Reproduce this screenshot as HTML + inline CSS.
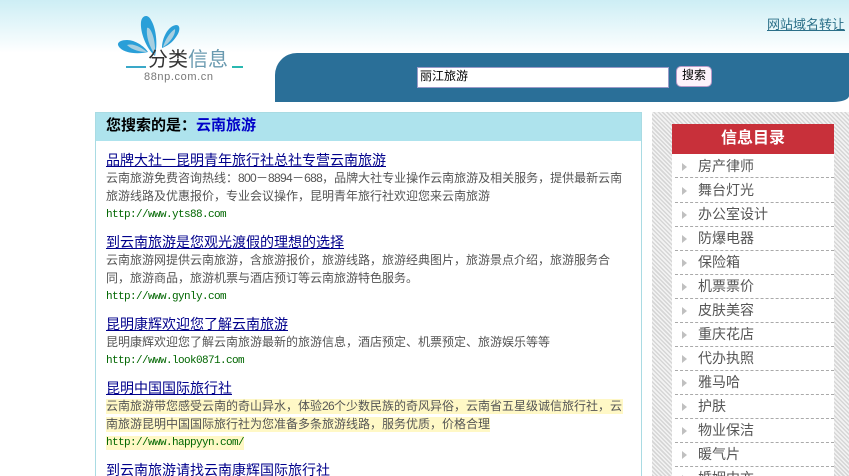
<!DOCTYPE html>
<html style="height:476px;overflow:hidden"><head><meta charset="utf-8">
<style>
html,body{margin:0;padding:0}
body{width:849px;height:476px;overflow:hidden;background:#fff;font-family:"Liberation Sans","WenQuanYi Zen Hei","Noto Sans CJK SC",sans-serif}
#w{position:relative;width:849px;height:476px;overflow:hidden}
.a{position:absolute;white-space:nowrap}
.t{font-size:14px;line-height:18px;color:#00008b;text-decoration:underline;left:106px}
.d{font-size:12px;line-height:18px;color:#555;left:106px;width:520px}
.d i{font-style:normal;letter-spacing:-.67px}
.u{font-family:"Liberation Mono",monospace;font-size:11px;letter-spacing:-.6px;line-height:14px;color:#060;left:106px}
.i{position:absolute;left:672px;width:162px;height:24px;background:#fff;font-size:14px;line-height:23px;color:#555;overflow:hidden}
.i:after{content:"";position:absolute;left:3px;right:0;top:23px;border-bottom:1px dashed #aaa}
.i span{position:absolute;left:26px}
.i b{position:absolute;left:10px;top:8px;width:0;height:0;border-left:5px solid #c0c0c0;border-top:4px solid transparent;border-bottom:4px solid transparent}
.y{background:#fff8c6}
</style></head><body><div id="w">
<div class="a" style="left:0;top:0;width:849px;height:53px;background:linear-gradient(#cdeef5,#fff)"></div>
<svg class="a" style="left:110px;top:10px" width="140" height="80" viewBox="0 0 140 80">
<path d="M45 46C36 38 30 22 31 12C32 5 38 4 41 10C46 18 48 34 45 46Z" fill="#2a9fd8"/><path d="M45 45C39 36 36 26 37 18C40 16 46 28 45 45Z" fill="#a8cfe0"/>
<path d="M52 38C52 28 58 16 66 15C71 15 70 22 66 27C62 33 57 36 52 38Z" fill="#2a9fd8"/><path d="M53 37C55 30 60 22 65 19C66 24 60 33 53 37Z" fill="#a8cfe0"/>
<path d="M38 42C30 44 16 44 10 38C5 33 10 30 17 30C25 30 34 36 38 42Z" fill="#2a9fd8"/><path d="M37 42C30 42 22 40 17 35C24 33 32 38 37 42Z" fill="#a8cfe0"/>
<rect x="16" y="56" width="20" height="2" fill="#3aa8c8"/><rect x="122" y="56" width="11" height="2" fill="#2ab8b0"/></svg>
<div class="a" style="left:148px;top:49px;font-size:20px;line-height:22px;color:#333">分类<span style="color:#6a9ab0">信息</span></div>
<div class="a" style="left:144px;top:70px;font-size:11px;line-height:14px;color:#777;letter-spacing:.6px">88np.com.cn</div>
<div class="a" style="left:767px;top:16px;font-size:13px;line-height:18px;color:#2a6f88;text-decoration:underline">网站域名转让</div>
<div class="a" style="left:275px;top:53px;width:574px;height:49px;background:#2a6f98;border-radius:22px 0 16px 0/22px 0 6px 0"></div>
<div class="a" style="left:417px;top:67px;width:250px;height:19px;background:#fff;border:1px solid #9a9ac8;font-size:12px;line-height:16px;color:#000;text-indent:2px">丽江旅游</div>
<div class="a" style="left:676px;top:66px;width:34px;height:19px;background:#fdf3fb;border:1px solid #b89ac8;border-radius:5px;font-size:12px;line-height:17px;color:#000;text-align:center">搜索</div>

<div class="a" style="left:95px;top:112px;width:545px;height:363px;border:1px solid #a9dbe3;border-bottom:0;background:#fff"></div>
<div class="a" style="left:96px;top:113px;width:545px;height:28px;background:#aee3ed;font-size:15px;line-height:26px;font-weight:bold;color:#000;text-indent:10px">您搜索的是：<span style="color:#0000c8">云南旅游</span></div>

<div class="a t" style="top:151px">品牌大社一昆明青年旅行社总社专营云南旅游</div>
<div class="a d" style="top:169px">云南旅游免费咨询热线：<i>800</i>－<i>8894</i>－<i>688</i>，品牌大社专业操作云南旅游及相关服务，提供最新云南</div>
<div class="a d" style="top:187px">旅游线路及优惠报价，专业会议操作，昆明青年旅行社欢迎您来云南旅游</div>
<div class="a u" style="top:208px">http://www.yts88.com</div>

<div class="a t" style="top:233px">到云南旅游是您观光渡假的理想的选择</div>
<div class="a d" style="top:251px">云南旅游网提供云南旅游，含旅游报价，旅游线路，旅游经典图片，旅游景点介绍，旅游服务合</div>
<div class="a d" style="top:269px">同，旅游商品，旅游机票与酒店预订等云南旅游特色服务。</div>
<div class="a u" style="top:290px">http://www.gynly.com</div>

<div class="a t" style="top:315px">昆明康辉欢迎您了解云南旅游</div>
<div class="a d" style="top:333px">昆明康辉欢迎您了解云南旅游最新的旅游信息，酒店预定、机票预定、旅游娱乐等等</div>
<div class="a u" style="top:354px">http://www.look0871.com</div>

<div class="a t" style="top:379px">昆明中国国际旅行社</div>
<div class="a y" style="left:106px;top:399px;width:517px;height:15px"></div>
<div class="a y" style="left:106px;top:417px;width:384px;height:15px"></div>
<div class="a y" style="left:106px;top:436px;width:138px;height:14px"></div>
<div class="a d" style="top:397px">云南旅游带您感受云南的奇山异水，体验<i>26</i>个少数民族的奇风异俗，云南省五星级诚信旅行社，云</div>
<div class="a d" style="top:415px">南旅游昆明中国国际旅行社为您准备多条旅游线路，服务优质，价格合理</div>
<div class="a u" style="top:436px">http://www.happyyn.com/</div>

<div class="a t" style="top:461px;height:15px;overflow:hidden">到云南旅游请找云南康辉国际旅行社</div>

<div class="a" style="left:652px;top:112px;width:197px;height:364px;background:repeating-linear-gradient(45deg,#d6d6d6 0 1.5px,#f3f3f3 1.5px 3px)"></div>
<div class="a" style="left:672px;top:124px;width:162px;height:30px;background:#c8303a;color:#fff;font-size:16px;font-weight:bold;line-height:29px;text-align:center">信息目录</div>
<div class="i" style="top:154px;height:25px"><b style="top:9px"></b><span style="top:1px">房产律师</span></div>
<div class="i" style="top:179px"><b></b><span>舞台灯光</span></div>
<div class="i" style="top:203px"><b></b><span>办公室设计</span></div>
<div class="i" style="top:227px"><b></b><span>防爆电器</span></div>
<div class="i" style="top:251px"><b></b><span>保险箱</span></div>
<div class="i" style="top:275px"><b></b><span>机票票价</span></div>
<div class="i" style="top:299px"><b></b><span>皮肤美容</span></div>
<div class="i" style="top:323px"><b></b><span>重庆花店</span></div>
<div class="i" style="top:347px"><b></b><span>代办执照</span></div>
<div class="i" style="top:371px"><b></b><span>雅马哈</span></div>
<div class="i" style="top:395px"><b></b><span>护肤</span></div>
<div class="i" style="top:419px"><b></b><span>物业保洁</span></div>
<div class="i" style="top:443px"><b></b><span>暖气片</span></div>
<div class="i" style="top:467px;height:9px"><b></b><span>婚姻中亦</span></div>
</div></body></html>
